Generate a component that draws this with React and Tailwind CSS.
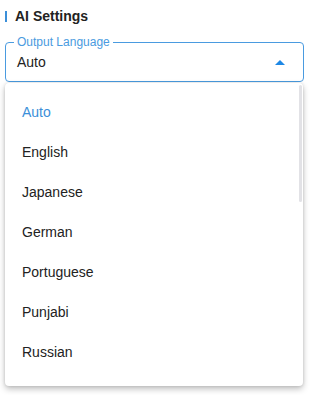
import React from 'react';

const languages = ['Auto', 'English', 'Japanese', 'German', 'Portuguese', 'Punjabi', 'Russian'];

export default function App() {
  const selected = 'Auto';

  return (
    <div className="w-[310px] h-[395px] bg-white overflow-hidden pt-[10px] font-['Liberation_Sans',Arial,sans-serif] text-[#222]">
      {/* section title */}
      <div className="flex items-center gap-2 pl-[5px] h-[12px]">
        <span className="w-[2px] h-[11px] bg-[#3b8fd9]" />
        <span className="text-[14px] font-bold leading-none">AI Settings</span>
      </div>

      {/* outlined select */}
      <div className="relative mx-[5px] mt-[20px] w-[299px] h-[40px] border border-[#4a9be0] rounded-[4px] flex items-center pl-[11px] pr-[18px]">
        <span className="absolute left-[8px] top-[-7px] px-[3px] bg-white text-[12px] leading-[13px] text-[#4a9be0]">Output Language</span>
        <span className="flex-1 text-[14px] leading-none">Auto</span>
        <svg width="10" height="5" viewBox="0 0 10 5">
          <path d="M0 5 L5 0 L10 5 Z" fill="#1e88e5" />
        </svg>
      </div>

      {/* dropdown menu */}
      <div className="relative mx-[5px] mt-[1px] w-[298px] h-[303px] bg-white rounded-[4px] shadow-[0_3px_6px_rgba(0,0,0,0.25),0_0_3px_rgba(0,0,0,0.12)] overflow-hidden">
        <ul className="pt-[9px]">
          {languages.map((lang) => (
            <li
              key={lang}
              className={`h-[40px] flex items-center pl-[17px] text-[14px] ${lang === selected ? 'text-[#3b8fd9]' : 'text-[#222]'}`}
            >
              {lang}
            </li>
          ))}
        </ul>
        <div className="absolute right-[1px] top-[2px] w-[3px] h-[117px] bg-[#e2e2e6] rounded-full" />
      </div>
    </div>
  );
}
